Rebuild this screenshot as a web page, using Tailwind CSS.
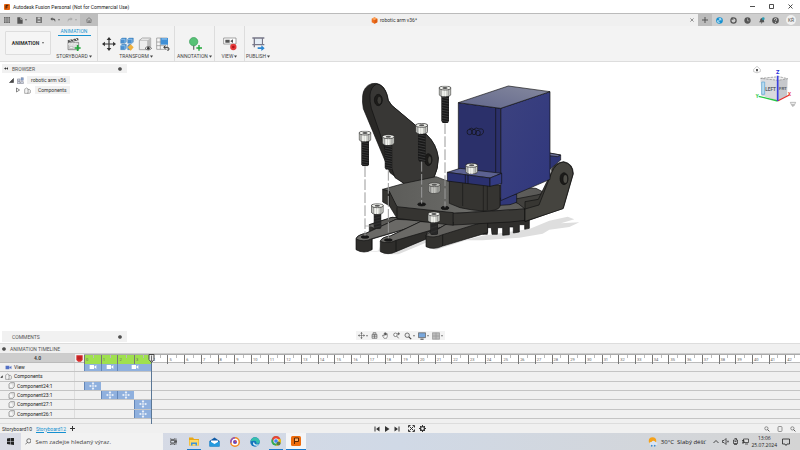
<!DOCTYPE html>
<html lang="en">
<head>
<meta charset="utf-8">
<meta name="viewport" content="width=device-width, initial-scale=1">
<title>Autodesk Fusion Personal</title>
<script src="https://cdn.jsdelivr.net/npm/@tailwindcss/browser@4"></script>
</head>
<body class="flex min-h-screen flex-col overflow-x-hidden bg-white font-[Roboto,'Liberation_Sans',sans-serif] text-[5px] leading-[8px] text-[#333]">

<svg class="hidden" aria-hidden="true">
  <symbol id="camera" viewBox="0 0 24 18"><path d="M2 3h13v12H2zM15 9l7-6v12z" fill="currentColor"/></symbol>
  <symbol id="move" viewBox="0 0 24 24"><path d="M12 0l4 5h-3v6h6V8l5 4-5 4v-3h-6v6h3l-4 5-4-5h3v-6H5v3l-5-4 5-4v3h6V5H8z" fill="currentColor"/></symbol>
  <symbol id="body" viewBox="0 0 20 20"><path d="M3 6l4-4h11v11l-4 5H3z" fill="#f8f8f8" stroke="#777" stroke-width="2" stroke-linejoin="round"/><path d="M6 5h8v9" fill="none" stroke="#aaa"/></symbol>
  <symbol id="bodies" viewBox="0 0 22 20"><path d="M2 7q0-3 3-3l3-2 5 3v12l-4 2H2zM11 8l5-2 4 3v8l-4 2h-7" fill="#f4f4f4" stroke="#777" stroke-width="1.8"/></symbol>
  <symbol id="dot" viewBox="0 0 12 12"><circle cx="6" cy="6" r="5.5" fill="#333"/><path d="M3 6h6" stroke="#aaa" stroke-width="1.5"/></symbol>
  <symbol id="caret" viewBox="0 0 8 6"><path d="M0 0h8L4 6z" fill="currentColor"/></symbol>
  <symbol id="lens" viewBox="0 0 20 20"><circle cx="8" cy="8" r="5.5" fill="#eee" stroke="#555" stroke-width="2"/><path d="M12 12l6 6" stroke="#444" stroke-width="3"/></symbol>
  <symbol id="screw-head" viewBox="0 0 38 34"><path d="M1 6v20q2 7 18 7t18-7V6z" fill="#c8cac4" stroke="#222" stroke-width="2"/><path d="M7 10v20M30 10v20" stroke="#999" stroke-width="3"/><path d="M13 11v21M20 11v21" stroke="#f2f3ef" stroke-width="5"/><ellipse cx="19" cy="7" rx="18" ry="6" fill="#f0f1ec" stroke="#222" stroke-width="2"/><ellipse cx="19" cy="7" rx="8" ry="3" fill="#555"/></symbol>
  <symbol id="thread" viewBox="0 0 26 76" preserveAspectRatio="none"><path d="M1 0h24v70l-4 6H5l-4-6z" fill="#191919"/><path d="M2 6l22 4M2 13l22 4M2 20l22 4M2 27l22 4M2 34l22 4M2 41l22 4M2 48l22 4M2 55l22 4M2 62l22 4M2 69l22 4" stroke="#555" stroke-width="1.5"/></symbol>
</svg>

<header>
  <div class="flex h-[13px] items-center gap-[3px] bg-white pl-1 text-[#222]">
    <svg class="size-[6px]" viewBox="0 0 18 18"><rect width="18" height="18" rx="3" fill="#e8630c"/><path d="M6 14V4h7M6 9h5" stroke="#40200c" stroke-width="3" fill="none"/></svg>
    <h1 class="flex-1">Autodesk Fusion Personal (Not for Commercial Use)</h1>
    <div class="flex gap-[14px] pr-[7px]">
      <button aria-label="Minimize"><svg class="size-[5px]" viewBox="0 0 10 10"><path d="M0 5h10" stroke="#222" stroke-width="1.6"/></svg></button>
      <button aria-label="Maximize"><svg class="size-[5px]" viewBox="0 0 10 10"><path d="M1 1h8v8H1z" stroke="#222" stroke-width="1.6" fill="none"/></svg></button>
      <button aria-label="Close"><svg class="size-[5px]" viewBox="0 0 10 10"><path d="M1 1l8 8M9 1L1 9" stroke="#222" stroke-width="1.6"/></svg></button>
    </div>
  </div>

  <div class="flex h-[13px] border-t border-[#bbb] bg-[#f0f0f0]">
    <div class="flex w-[80px] items-center bg-[#cfcfcf] pl-1 text-[#555]">
      <button class="w-[13px]" aria-label="Data panel"><svg class="size-[6px]" viewBox="0 0 18 18"><path d="M0 0h5v5H0zM6.500 0h5v5h-5zM13 0h5v5h-5zM0 6.500h5v5H0zM6.500 6.500h5v5h-5zM13 6.500h5v5h-5zM0 13h5v5H0zM6.500 13h5v5h-5zM13 13h5v5h-5z" fill="#666"/></svg></button>
      <button class="flex w-[19px] items-center gap-[2px]" aria-label="File"><svg class="h-[7px] w-[6px]" viewBox="0 0 18 21"><path d="M1 1h10l6 6v13H1z" fill="#555"/><path d="M11 1v6h6" stroke="#ddd" stroke-width="2" fill="none"/></svg><svg class="size-[2px]"><use href="#caret"/></svg></button>
      <button class="w-[14px]" aria-label="Save"><svg class="size-[6px]" viewBox="0 0 18 18"><path d="M1 1h16v16H1z" fill="#8a8a8a" stroke="#555" stroke-width="2"/><path d="M5 1h8v6H5zM4 11h10v5H4z" fill="#ddd" stroke="#555"/></svg></button>
      <button class="flex w-[17px] items-center gap-[2px]" aria-label="Undo"><svg class="size-[6px]" viewBox="0 0 18 18"><path d="M7 1L1 6l6 5V8q8-1 8 8 4-12-8-12z" fill="#555"/></svg><svg class="size-[2px]"><use href="#caret"/></svg></button>
      <button class="flex items-center gap-[2px] text-[#999]" aria-label="Redo"><svg class="size-[6px]" viewBox="0 0 18 18"><path d="M11 1l6 5-6 5V8q-8-1-8 8-4-12 8-12z" fill="#aaa"/></svg><svg class="size-[2px]"><use href="#caret"/></svg></button>
    </div>
    <button class="flex w-[18px] items-center justify-center bg-[#bebebe]" aria-label="Home"><svg class="size-[6px]" viewBox="0 0 18 18"><path d="M1 9l8-7 8 7M3 8v9h12V8M8 17v-6h3v6" fill="none" stroke="#666" stroke-width="2"/></svg></button>
    <div class="flex flex-1 items-center justify-between pr-1">
      <span></span>
      <span class="flex items-center gap-[2px]"><svg class="size-[7px]" viewBox="0 0 20 20"><path d="M10 1l8 4v10l-8 4-8-4V5z" fill="#f0711f"/><path d="M2 5l8 4 8-4-8-4z" fill="#f9a25c"/><path d="M10 9v10l8-4V5z" fill="#db5c12"/></svg>robotic arm v36*</span>
      <button aria-label="Close tab"><svg class="size-[4px]" viewBox="0 0 10 10"><path d="M1 1l8 8M9 1L1 9" stroke="#555" stroke-width="1.5"/></svg></button>
    </div>
    <div class="flex items-center bg-[#cfcfcf]">
      <button class="flex h-full w-[14px] items-center justify-center bg-[#bcbcbc]" aria-label="New tab"><svg class="size-[6px]" viewBox="0 0 12 12"><path d="M6 0v12M0 6h12" stroke="#555" stroke-width="2"/></svg></button>
      <div class="flex items-center gap-[7px] pl-1 pr-[4px]">
        <button aria-label="Extensions"><svg class="size-[7px]" viewBox="0 0 20 20"><circle cx="10" cy="10" r="9.500" fill="#1590d0"/><path d="M6 13l7-8M8 5h6v5M5 9v6h6" stroke="#fff" stroke-width="2" fill="none"/></svg></button>
        <button aria-label="Updates"><svg class="size-[7px]" viewBox="0 0 20 20"><circle cx="10" cy="10" r="7.500" fill="#ccc" stroke="#555" stroke-width="3.500"/><path d="M6 0v7h4" stroke="#555" stroke-width="2" fill="none"/></svg></button>
        <button aria-label="Job status"><svg class="size-[7px]" viewBox="0 0 20 20"><circle cx="10" cy="10" r="9" fill="#555"/><path d="M10 4v7h5" stroke="#bbb" stroke-width="2" fill="none"/></svg></button>
        <button aria-label="Notifications"><svg class="size-[7px]" viewBox="0 0 20 20"><path d="M3 15l3-4q0-8 6-8t5 8l1 4zM8 16h5l-3 3z" fill="#555"/><circle cx="15" cy="5" r="4" fill="#2b9ab0"/></svg></button>
        <button aria-label="Help"><svg class="size-[7px]" viewBox="0 0 20 20"><circle cx="10" cy="10" r="9.500" fill="#555"/><path d="M7 8q0-4 3-4t3 3-3 5M10 14v3" stroke="#ddd" stroke-width="2.500" fill="none"/></svg></button>
        <button class="flex size-[10px] items-center justify-center rounded-full bg-[#f0f0f0] text-[5px] text-[#555]">KŘ</button>
      </div>
    </div>
  </div>

  <div class="flex h-[36px] border-b border-[#ddd] bg-[#f3f3f3] text-[#444]">
    <button class="mb-[6px] ml-[5px] mt-[5px] flex w-[46px] items-center justify-center gap-[3px] rounded-[1px] border border-[#ddd] bg-[#f5f5f5] font-bold text-[#333]" aria-haspopup="menu">ANIMATION <svg class="size-[2px]"><use href="#caret"/></svg></button>
    <div class="flex w-[47px] flex-col items-center border-r border-[#ddd]">
      <a href="#" class="mt-[1px] h-[9px] w-[33px] border-b border-[#1793d1] text-center text-[#1793d1]">ANIMATION</a>
      <svg class="mt-[1px] size-[14px]" viewBox="0 0 42 42"><path d="M3 16h32v22H3z" fill="#ddd" stroke="#666" stroke-width="2"/><path d="M2 10l31-7 2 7-32 7z" fill="#555"/><path d="M7 8l6 6M16 6l6 6M25 4l6 6M8 17l-4 6M17 17l-4 6M26 17l-4 6" stroke="#eee" stroke-width="3"/><path d="M8 29h10v5H8z" fill="#fff" stroke="#777"/><path d="M32 24v18M23 33h18" stroke="#20a83a" stroke-width="5"/></svg>
      <button class="mt-px flex items-center gap-px">STORYBOARD <svg class="size-[3px]"><use href="#caret"/></svg></button>
    </div>
    <div class="flex w-[77px] flex-col items-center border-r border-[#ddd]">
      <div class="mt-[11px] flex gap-1">
        <button aria-label="Transform components"><svg class="size-[14px] text-[#333]"><use href="#move"/></svg></button>
        <button aria-label="Auto explode"><svg class="size-[14px]" viewBox="0 0 42 42"><g fill="#4a90d0" stroke="#2d6da5"><path d="M2 7l4-4h13v12l-4 4H2zM23 7l4-4h13v12l-4 4H23zM2 26l4-4h13v12l-4 4H2zM23 26l4-4h6v16H23z"/></g><path d="M2 7h13v12M23 7h13v12M2 26h13v12" fill="none" stroke="#a8d2f5" stroke-width="2"/><path d="M32 22l9 9-9 10-9-10z" fill="#f2b13b"/></svg></button>
        <button aria-label="Show or hide"><svg class="size-[14px]" viewBox="0 0 42 42"><path d="M4 10l9-7h25v25l-9 10H4z" fill="#eee" stroke="#888" stroke-width="2"/><path d="M4 10h25v28" fill="none" stroke="#aaa" stroke-width="2"/><path d="M29 10l9-7v25l-9 10z" fill="#bbb"/><path d="M21 34q10-11 20 0-10 10-20 0z" fill="#eee" stroke="#444" stroke-width="2"/><circle cx="31" cy="34" r="4" fill="#333"/></svg></button>
        <button aria-label="Restore home"><svg class="size-[14px]" viewBox="0 0 42 42"><path d="M2 3h32v34H2zM2 15h32M2 26h25M13 3v34" fill="#f6f6f6" stroke="#888" stroke-width="2"/><path d="M14 3h22v20H14z" fill="#3f8fd6"/><path d="M17 6h16" stroke="#9ccbf3" stroke-width="3"/><path d="M24 31h10q5 0 5 5t-5 4M29 26l-6 5 6 5" stroke="#333" stroke-width="3" fill="none"/></svg></button>
      </div>
      <button class="mt-px flex items-center gap-px">TRANSFORM <svg class="size-[3px]"><use href="#caret"/></svg></button>
    </div>
    <div class="flex w-[40px] flex-col items-center border-r border-[#ddd]">
      <svg class="mt-[11px] size-[14px]" viewBox="0 0 42 42"><path d="M17 24v14" stroke="#777" stroke-width="4"/><circle cx="17" cy="14" r="12.500" fill="#58c276" stroke="#349a55" stroke-width="2"/><path d="M33 24v17M25 33h17" stroke="#20a83a" stroke-width="4"/></svg>
      <button class="mt-px flex items-center gap-px">ANNOTATION <svg class="size-[3px]"><use href="#caret"/></svg></button>
    </div>
    <div class="flex w-[30px] flex-col items-center border-r border-[#ddd]">
      <svg class="mt-[11px] size-[14px]" viewBox="0 0 42 42"><path d="M2 3h37v18H2z" fill="#fff" stroke="#777" stroke-width="2"/><path d="M7 8h13v9H7zM22 12l8-5v11l-8-5z" fill="#555"/><circle cx="31" cy="30" r="9.500" fill="#e33a3a"/><circle cx="31" cy="30" r="4" fill="#b31217"/></svg>
      <button class="mt-px flex items-center gap-px">VIEW <svg class="size-[3px]"><use href="#caret"/></svg></button>
    </div>
    <div class="flex w-[26px] flex-col items-center">
      <svg class="mt-[11px] size-[14px]" viewBox="0 0 42 42"><path d="M4 3h36M4 23h36M10 3v28M34 3v20" stroke="#778" stroke-width="4" fill="none"/><path d="M12 6h20v15H12z" fill="#e5edf5"/><path d="M20 31h11v-6l10 9-10 8v-6H20z" fill="#2b86d2"/></svg>
      <button class="mt-px flex items-center gap-px">PUBLISH <svg class="size-[3px]"><use href="#caret"/></svg></button>
    </div>
  </div>
</header>

<main class="relative flex flex-1 flex-col justify-between bg-white">
  <svg class="absolute left-1/2 top-[13px] -ml-[50px] h-[180px] w-[230px]" viewBox="0 0 690 540" role="img" aria-label="Exploded view of a robotic gripper" stroke-linejoin="round">
    <defs>
      <linearGradient id="top" x1="0" y1="1" x2="1" y2="0"><stop offset="0" stop-color="#62678c"/><stop offset="1" stop-color="#85899e"/></linearGradient>
      <linearGradient id="side" x1="0" y1="0" x2="1" y2="1"><stop offset="0" stop-color="#3c427f"/><stop offset="1" stop-color="#30377d"/></linearGradient>
      <linearGradient id="plate" x1="0" y1="0" x2="1" y2="0"><stop offset="0" stop-color="#5b5b58"/><stop offset=".5" stop-color="#6a6a67"/><stop offset="1" stop-color="#575654"/></linearGradient>
    </defs>
    <g fill="#dedede"><path d="M235 520l35-6 128-32 140-20 60-25 55-12 20 8-40 12 55-3-30 14-60 8-20 12-70 12-110 8-50 0-90 28z"/><path d="M25 534l60-7 8-20 0 22zM95 538l50 0 90-38v-12z"/></g>
    <g stroke="#111" stroke-width="2">
      <path d="M38 62q3-28 27-36 28-6 42 22 6 12 8 28l10 15 105 88q30 28 35 70 0 32-14 61L165 328l-45-35-80-192q-4-20-2-39z" fill="#292826"/>
      <path d="M60 60q2-24 20-33 20 2 30 30l5 20 10 14 105 88q30 28 35 70 0 32-14 61l-88 16-28-18L64 100q-5-20-4-40z" fill="#383735"/>
      <ellipse cx="85" cy="75" rx="12" ry="17" fill="#1d1c1a"/><ellipse cx="88" cy="76" rx="7" ry="12" fill="#3d3c38"/>
      <ellipse cx="235" cy="254" rx="11" ry="18" fill="#1d1c1a"/><ellipse cx="239" cy="255" rx="6" ry="12" fill="#45443f"/>
      <path d="M58 449l68-22 60 4-95 36-4 12-29-6z" fill="#31302e"/>
      <path d="M58 449l68-22 60 4-95 33q-20 3-33-15z" fill="#5a5956"/>
      <path d="M18 492q3-12 30-17l90-42 110 5-182 54v32q-24 14-48 0z" fill="#2f2e2c"/>
      <path d="M18 492q3-12 30-17l90-42 110 5-182 53q-24 12-48 1z" fill="#6a6966"/>
      <path d="M66 492v32" fill="none"/>
      <path d="M91 499q3-12 30-16l90-43 110 3-90 30v18l-93 39q-24 12-47 0z" fill="#2e2d2b"/>
      <path d="M91 499q3-12 30-16l90-43 110 3-183 53q-24 12-47 3z" fill="#6a6966"/>
      <path d="M138 497v32" fill="none"/>
      <path d="M398 430h140v30l-14 3v-14h-16v22l-18 3v-18h-12v23l-20 2v-23h-15l-1 20h-16l-2-20h-12v20h-14z" fill="#2f2e2c"/>
      <path d="M228 482q3-9 25-13l40-24 120-10v38l-135 40q-27 13-50 2z" fill="#33322f"/>
      <path d="M228 482q3-9 25-13l40-24 120-8-135 42q-27 12-50 3z" fill="#62615e"/>
      <path d="M278 479v34" fill="none"/>
      <path d="M98 343l65-18 95-20 40 15 260 20 40 20-73 42-215 13-169-18-25-48z" fill="url(#plate)"/>
      <path d="M98 343l20 6 23 46 169 18v38l-169-21-23-38-20-11z" fill="#353431"/>
      <path d="M310 415l215-13v34l-45 5-170 9z" fill="#393835"/>
      <path d="M118 349v43M141 397v33" fill="none"/>
      <path d="M480 375l80-15 40-10-10 30-65 22-20-16z" fill="#41403d"/>
      <path d="M525 380l40-7 40-83 0-8q12-19 36-22 28 5 29 36l-30 104-115 40z" fill="#373632"/>
      <path d="M525 402l42-12 38-97q12-29 35-32 28 5 29 36l-30 104-114 38z" fill="#45443f"/>
      <ellipse cx="642" cy="311" rx="12" ry="18" fill="#1c1b19"/><ellipse cx="646" cy="312" rx="7" ry="13" fill="#504f49"/>
      <path d="M450 370l50-13v25l-20 7-30 2z" fill="#303779"/>
      <path d="M598 234l34 6v15l-34 30z" fill="#2f3676"/>
      <path d="M598 234l34 6-10 5-24-3z" fill="#6b7097"/>
      <path d="M452 100l148-50v263l-148 64z" fill="url(#side)"/>
      <path d="M325 83l127 17v200l-127-15z" fill="#2b306a"/>
      <path d="M325 83l150-50 125 17-148 50z" fill="url(#top)"/>
      <path d="M437 99v195" fill="none"/>
      <g fill="none"><ellipse cx="359" cy="171" rx="8" ry="8"/><ellipse cx="372" cy="171" rx="7" ry="8"/><ellipse cx="384" cy="174" rx="7" ry="8"/><path d="M357 163q8-7 14 0 7-8 16-1 16-3 13 11-4 9-13 8"/></g>
      <path d="M298 318l152 12v65q-8 14-50 13-35-2-70-10l-32-13z" fill="#353431"/>
      <path d="M338 325v68M400 332v75M412 333v72" fill="none" stroke-width="1.500"/>
      <path d="M292 292l38-12 125 15-35 14z" fill="#5c6291"/>
      <path d="M292 292l128 17v25l-128-16z" fill="#2b316f"/>
      <path d="M420 309l35-14v31l-35 8z" fill="#333b82"/>
      <path d="M346 299v26M354 300v26" fill="none"/>
      <ellipse cx="215" cy="388" rx="12" ry="5" fill="#171717"/><ellipse cx="285" cy="399" rx="12" ry="5" fill="#171717"/>
      <ellipse cx="45" cy="486" rx="12" ry="4" fill="#171717"/><ellipse cx="115" cy="495" rx="12" ry="4" fill="#171717"/>
    </g>
    <g stroke="#999" stroke-width="3" stroke-dasharray="32 7"><path d="M45 274v208M115 285v205M215 258v128M285 145v252"/></g>
    <path d="M45 453h35" stroke="#999" stroke-width="2"/>
    <use href="#thread" x="273" y="60" width="25" height="84"/><use href="#screw-head" x="266" y="32" width="38" height="34"/>
    <use href="#thread" x="33" y="196" width="25" height="78"/><use href="#screw-head" x="26" y="167" width="38" height="34"/>
    <use href="#thread" x="103" y="206" width="25" height="78"/><use href="#screw-head" x="96" y="178" width="38" height="34"/>
    <use href="#thread" x="203" y="172" width="25" height="88"/><use href="#screw-head" x="196" y="144" width="38" height="34"/>
    <use href="#thread" x="70" y="413" width="25" height="49"/><use href="#screw-head" x="63" y="385" width="38" height="34"/>
    <use href="#thread" x="240" y="438" width="25" height="42"/><use href="#screw-head" x="233" y="410" width="38" height="34"/>
    <use href="#screw-head" x="234" y="322" width="38" height="34" opacity=".65"/>
    <use href="#screw-head" x="346" y="264" width="38" height="34"/>
  </svg>

  <div class="flex items-start justify-between">
    <nav class="pl-[2px] pt-[2px]" aria-label="Browser">
      <div class="flex h-[9px] w-[125px] items-center gap-1 bg-[#f1f1f1] pl-[2px] pr-[5px] text-[#555]">
        <svg class="h-[3px] w-[4px]" viewBox="0 0 12 8"><path d="M6 0v8L0 4zM12 0v8L6 4z" fill="#333"/></svg>
        <span class="flex-1">BROWSER</span><svg class="size-[4px]"><use href="#dot"/></svg>
      </div>
      <div class="mt-[2px] flex h-[10px] items-center gap-[3px] pl-[7px]">
        <svg class="size-[5px]" viewBox="0 0 10 10"><path d="M9 1v8H1zM6 5v3" fill="#555" stroke="#222"/></svg>
        <svg class="size-[7px]" viewBox="0 0 21 21"><path d="M1 6h8v6H1zM1 14h8v6H1zM11 14h8v6h-8z" fill="#dfe7f2" stroke="#667" stroke-width="1.500"/><path d="M12 2h7v8h-7z" fill="#88a9d6" stroke="#557"/></svg>
        <span class="bg-[#f1f1f1] px-1">robotic arm v36</span>
      </div>
      <div class="flex h-[10px] items-center gap-[4px] pl-[14px]">
        <svg class="h-[6px] w-[4px]" viewBox="0 0 8 10"><path d="M1 1l6 4-6 4z" fill="none" stroke="#555" stroke-width="1.400"/></svg>
        <svg class="size-[7px]"><use href="#bodies"/></svg>
        <span class="bg-[#f1f1f1] px-[3px]">Components</span>
      </div>
    </nav>
    <svg class="h-[50px] w-[60px]" viewBox="0 6 180 150" role="img" aria-label="View cube" font-family="Roboto, sans-serif">
      <path d="M41 28l10-9 10 9v7q-10 7-20 0z" fill="#fff" stroke="#999" stroke-width="1.500"/><path d="M48 27h6v7h-6z" fill="#555"/>
      <path d="M62 55l55-4 26 6-2 52-27 13-50-16z" fill="#c6c8cc"/>
      <path d="M62 55l52 6v60l-50-16z" fill="#dadbde"/><path d="M62 55l55-5 26 6-29 5z" fill="#f0f0f0" stroke="#888" stroke-dasharray="7 3" stroke-width="2"/>
      <path d="M65 66h9v37h-9z" fill="#b8dcf0" stroke="#5ba5d4" stroke-width="2"/>
      <text x="76" y="92" font-size="14" font-weight="bold" fill="#5c6068">LEFT</text><text x="117" y="90" font-size="13" font-weight="bold" fill="#5c6068">FRT</text>
      <path d="M113 123L56 109" stroke="#28c840" stroke-width="4"/><path d="M113 123l35-18" stroke="#e8322d" stroke-width="4"/><path d="M113 123V47" stroke="#3a3fe0" stroke-width="5"/>
      <text x="108" y="43" font-size="17" font-weight="bold" fill="#2b31d8">Z</text><text x="144" y="108" font-size="14" font-weight="bold" fill="#e8322d">X</text><text x="47" y="114" font-size="14" font-weight="bold" fill="#28c840">Y</text>
      <path d="M151 127h16l-3 7h-10zM155 136h8l-4 4z" fill="#eee" stroke="#888" stroke-width="1.500"/>
    </svg>
  </div>

  <div class="grid grid-cols-[1fr_auto_1fr] items-start pb-px">
    <div class="ml-[2px] flex h-[11px] w-[125px] items-center justify-between bg-[#f1f1f1] pl-[10px] pr-[5px] text-[#555]">COMMENTS <svg class="size-[4px]"><use href="#dot"/></svg></div>
    <div class="flex h-[9px] items-center gap-[3px] bg-[#f3f3f3] px-[2px] text-[#555]" role="toolbar" aria-label="Navigation">
      <button class="flex items-center gap-px" aria-label="Orbit"><svg class="size-[7px]"><use href="#move"/></svg><svg class="size-[2px]"><use href="#caret"/></svg></button>
      <button aria-label="Look at"><svg class="size-[7px]" viewBox="0 0 20 20"><path d="M3 7h14v11H3zM6 7V2h8v5M3 12h14M10 7v11" fill="#ddd" stroke="#666" stroke-width="2"/></svg></button>
      <button class="ml-px" aria-label="Pan"><svg class="size-[7px]" viewBox="0 0 20 20"><path d="M6 18l-5-8 2-1 3 3V4h2v5-7h2v7-6h2v6-4h3v8l-2 5z" fill="#fff" stroke="#444" stroke-width="1.500"/></svg></button>
      <button class="ml-px" aria-label="Zoom"><svg class="size-[7px]" viewBox="0 0 20 20"><circle cx="7" cy="8" r="5" fill="#fff" stroke="#555" stroke-width="2"/><path d="M11 12l5 6M16 1v8M12 5h8" stroke="#444" stroke-width="2"/></svg></button>
      <button class="ml-px flex items-center gap-px" aria-label="Fit"><svg class="size-[8px]"><use href="#lens"/></svg><svg class="size-[2px]"><use href="#caret"/></svg></button>
      <button class="flex items-center gap-px" aria-label="Display settings"><svg class="size-[8px]" viewBox="0 0 20 20"><path d="M1 2h18v12H1z" fill="#78a7dc" stroke="#666" stroke-width="2"/><path d="M6 18h8" stroke="#555" stroke-width="3"/></svg><svg class="size-[2px]"><use href="#caret"/></svg></button>
      <button class="flex items-center gap-px" aria-label="Viewports"><svg class="size-[8px]" viewBox="0 0 20 20"><path d="M1 2h18v16H1zM1 10h18M10 2v16" fill="#bbb" stroke="#999" stroke-width="2"/></svg><svg class="size-[2px]"><use href="#caret"/></svg></button>
    </div>
  </div>
</main>

<section class="overflow-hidden border-t border-[#ddd] bg-[#f0f0f0]" aria-label="Animation timeline">
  <div class="flex h-[10px] items-center gap-1 border-b border-[#ccc] pl-[2px] text-[#555]"><svg class="size-[4px]"><use href="#dot"/></svg>ANIMATION TIMELINE</div>
  <div class="relative">
    <div class="flex h-[9px] border-b border-[#bbb]">
      <div class="w-[75px] bg-[#cdcdcd] text-center font-bold text-[#444]">4.0</div>
      <div class="flex w-[9px] items-center justify-center"><svg class="size-[7px]" viewBox="0 0 20 20"><path d="M1 1h18v13l-5 5H6l-5-5z" fill="#d92b2b"/><path d="M4 6h12M4 11h12" stroke="#991818" stroke-width="2"/></svg></div>
      <ol id="ruler" class="-mr-[2px] grid flex-1 grid-cols-[repeat(43,minmax(0,1fr))] border-t border-[#aaa] bg-white text-[4px] leading-[9px]"></ol>
    </div>
    <div id="tracks" class="flex h-[56px] flex-col"></div>
    <div class="h-[5px] border-b border-[#ddd]"></div>
    <div class="pointer-events-none absolute inset-y-0 -right-[2px] left-[84px] grid grid-cols-[repeat(43,minmax(0,1fr))]">
      <div class="relative col-start-5 border-l border-[#5a7796]"><svg class="absolute -left-[4px] top-0 h-[9px] w-[7px]" viewBox="0 0 14 18"><path d="M2 1h10v10l-5 6-5-6z" fill="#eee" stroke="#444" stroke-width="2"/><path d="M7 3v12" stroke="#444" stroke-width="1.500"/></svg></div>
    </div>
  </div>
  <div class="grid h-[9px] grid-cols-[1fr_auto_1fr] items-center">
    <div class="flex items-center gap-1 pl-[2px]">
      <a href="#">Storyboard10</a><a href="#" class="text-[#1590d0] underline underline-offset-1">Storyboard12</a>
      <button aria-label="Add storyboard"><svg class="size-[5px]" viewBox="0 0 10 10"><path d="M5 0v10M0 5h10" stroke="#333" stroke-width="2"/></svg></button>
    </div>
    <div class="flex items-center gap-1">
      <button aria-label="To start"><svg class="size-[6px]" viewBox="0 0 12 12"><path d="M1 1h2v10H1zM11 1v10L4 6z" fill="#333"/></svg></button>
      <button aria-label="Play"><svg class="size-[6px]" viewBox="0 0 12 12"><path d="M2 0l9 6-9 6z" fill="#333"/></svg></button>
      <button aria-label="To end"><svg class="size-[6px]" viewBox="0 0 12 12"><path d="M9 1h2v10H9zM1 1v10l7-5z" fill="#333"/></svg></button>
      <button class="ml-1" aria-label="Fit timeline"><svg class="size-[7px]" viewBox="0 0 14 14"><path d="M1 5V1h4M9 1h4v4M13 9v4H9M5 13H1V9M3 3l8 8M11 3l-8 8" fill="none" stroke="#333" stroke-width="2"/></svg></button>
      <button aria-label="Settings"><svg class="size-[7px]" viewBox="0 0 14 14"><circle cx="7" cy="7" r="4" fill="none" stroke="#333" stroke-width="2.500"/><path d="M7 0v3M7 11v3M0 7h3M11 7h3M2 2l2 2M10 10l2 2M12 2l-2 2M4 10l-2 2" stroke="#333" stroke-width="2"/></svg></button>
    </div>
    <div class="flex items-center justify-end gap-[7px] pr-[4px]">
      <button aria-label="Zoom out"><svg class="size-[6px]"><use href="#lens"/></svg></button>
      <button aria-label="Zoom range"><svg class="size-[6px]" viewBox="0 0 12 12"><rect x="2" y="1" width="8" height="10" rx="2" fill="#eee" stroke="#777" stroke-width="1.500"/></svg></button>
      <button aria-label="Zoom in"><svg class="size-[6px]"><use href="#lens"/></svg></button>
    </div>
  </div>
</section>

<footer class="flex h-[17px] bg-linear-to-r from-[#d9dbe5] via-[#d0d9e6] to-[#d4d4d4] font-['Open_Sans','Noto_Sans',sans-serif] text-[#222]">
  <button class="flex w-[21px] items-center justify-center" aria-label="Start"><svg class="size-[7px]" viewBox="0 0 14 14"><path d="M0 1l6-1v6H0zM7 0l7-1v7H7zM0 7h6v6l-6-1zM7 7h7v7l-7-1z" fill="#222"/></svg></button>
  <label class="flex w-[142px] items-center gap-[4px] bg-[#f2f2f2] pl-[4px]">
    <svg class="size-[7px]" viewBox="0 0 20 20"><circle cx="12" cy="8" r="6.500" fill="none" stroke="#333" stroke-width="2"/><path d="M7 13l-6 6" stroke="#333" stroke-width="2"/></svg>
    <input class="w-full bg-transparent text-[6px] outline-none placeholder:text-[#444]" placeholder="Sem zadejte hledaný výraz." aria-label="Sem zadejte hledaný výraz.">
  </label>
  <div class="flex">
    <button class="flex w-5 items-center justify-center" aria-label="Task view"><svg class="size-[7px]" viewBox="0 0 20 20"><path d="M2 7h11v7H2zM2 1v3h11V1M2 20v-3h11v3M17 1v18M15 8h4v4h-4z" fill="none" stroke="#333" stroke-width="2"/></svg></button>
    <button class="flex w-[21px] items-center justify-center" aria-label="File Explorer"><span class="flex h-full w-[14px] items-center justify-center border-b border-[#1979ca]"><svg class="h-[9px] w-[10px]" viewBox="0 0 20 18"><path d="M0 1h8l2 3h10v13H0z" fill="#e8a818"/><path d="M1 6h18v11H1z" fill="#ffd968"/><path d="M4 17v-6h12v6h-3v-3H7v3z" fill="#3c93dc"/></svg></span></button>
    <button class="flex w-[20px] items-center justify-center" aria-label="Mail"><svg class="h-[10px] w-[11px]" viewBox="0 0 22 20"><path d="M1 8l10-7 10 7v11H1z" fill="#0f5ba6"/><path d="M4 7h14v7H4z" fill="#fff"/><path d="M1 8l10 6 10-6v11H1z" fill="#249ade"/></svg></button>
    <button class="flex w-[21px] items-center justify-center" aria-label="Secure browser"><svg class="size-[10px]" viewBox="0 0 20 20"><circle cx="10" cy="10" r="8.500" fill="#fff" stroke="#f58a20" stroke-width="3"/><path d="M10 1.500a8.500 8.500 0 00-8 10" fill="none" stroke="#8753c7" stroke-width="3"/><circle cx="10" cy="10" r="4" fill="#6b46b8"/><path d="M10 6l4 4h-4z" fill="#e74c3c"/></svg></button>
    <button class="flex w-[20px] items-center justify-center" aria-label="Edge"><svg class="size-[10px]" viewBox="0 0 20 20"><circle cx="10" cy="10" r="9.500" fill="#1674bd"/><path d="M1 9q2-8 9-8.500 9 1 9.500 9-1 5-7 4 2-6-4-6-5 0-7.500 1.500z" fill="#36bfad"/><path d="M8 10q0 6 10 5l-2 2Q6 19 6 12z" fill="#dff4fb"/></svg></button>
    <button class="flex w-[21px] items-center justify-center" aria-label="Chrome"><span class="flex h-full w-[14px] items-center justify-center border-b border-[#1979ca]"><svg class="size-[10px]" viewBox="0 0 20 20"><circle cx="10" cy="10" r="9.500" fill="#34a853"/><path d="M2 5a9.500 9.500 0 0117 1H10L6 12z" fill="#ea4335"/><path d="M19 6a9.500 9.500 0 01-9 13.500l4-8L12 6z" fill="#fbbc05"/><circle cx="10" cy="10" r="4.500" fill="#4285f4" stroke="#fff" stroke-width="1.500"/><circle cx="15" cy="15" r="4" fill="#557a4b"/></svg></span></button>
    <button class="flex w-[20px] items-center justify-center border-b border-[#1979ca] bg-[#f4f5f7]" aria-label="Fusion"><svg class="size-[10px]" viewBox="0 0 20 20"><rect width="20" height="20" rx="3" fill="#ee6c0d"/><path d="M7 16V4h8v7H7" fill="#ffb169" stroke="#5c2805" stroke-width="2"/></svg></button>
  </div>
  <div class="ml-auto flex items-center">
    <svg class="mr-[3px] size-[10px]" viewBox="0 0 20 20"><circle cx="9" cy="8" r="7.500" fill="#f5a21b"/><path d="M4 16q-4-6 3-6 3-5 8 0 6 1 3 6z" fill="#d9e5f5"/><path d="M8 16l-1 3M14 16l-1 3" stroke="#2581d6" stroke-width="2.500"/></svg>
    <span class="flex gap-[3px] text-[6px]"><span>30°C</span><span>Slabý déšť</span></span>
    <div class="ml-[7px] flex items-center gap-[3px]">
      <svg class="size-[6px]" viewBox="0 0 12 12"><path d="M1 8l5-5 5 5" fill="none" stroke="#222" stroke-width="1.600"/></svg>
      <svg class="size-[7px]" viewBox="0 0 14 14"><path d="M1 5h3l4-4v12L4 9H1zM10 5l4 4M14 5l-4 4" fill="none" stroke="#222" stroke-width="1.400"/></svg>
      <svg class="size-[7px]" viewBox="0 0 14 14"><path d="M3 4h8v7H3zM5 1h4v3M4 13h6M5 7h4" fill="none" stroke="#222" stroke-width="1.400"/></svg>
      <svg class="size-[7px]" viewBox="0 0 14 14"><path d="M3 2h10v7H3zM6 12h6M0 5h4v5H0z" fill="#ddd" stroke="#222" stroke-width="1.400"/></svg>
    </div>
    <time class="ml-[3px] text-center text-[5px] leading-[7px]" datetime="2024-07-25T13:06">13:06<br>25.07.2024</time>
    <button class="ml-[5px] mr-[10px]" aria-label="Notification center"><svg class="size-[8px]" viewBox="0 0 16 16"><path d="M1 2h14v10h-5l-2 3-2-3H1z" fill="none" stroke="#222" stroke-width="1.600"/></svg></button>
  </div>
</footer>

<script>
  // Ruler: one column per second, the first four are the played range.
  document.getElementById('ruler').innerHTML = Array.from({ length: 43 }, (_, i) => `
    <li class="relative ${i < 4 ? 'bg-[#9fe04f]' : ''} border-l border-[#777] pl-px text-[#666]">
      <span class="absolute left-1/2 top-0 h-[3px] border-l border-[#bbb]"></span>${i}</li>`).join('');

  // Tracks: "at" holds the grid placement of each clip.
  const tracks = [
    { name: 'View', icon: 'camera', clip: 'camera', pad: 'pl-[5px] text-[#5370c4]', at: ['col-start-1 col-span-1', 'col-start-2 col-span-1', 'col-start-3 col-span-2'] },
    { name: 'Components', icon: 'bodies', pad: 'pl-0', open: true, at: [] },
    { name: 'Component24:1', icon: 'body', clip: 'move', pad: 'pl-[8px]', at: ['col-start-1 col-span-1'] },
    { name: 'Component23:1', icon: 'body', clip: 'move', pad: 'pl-[8px]', at: ['col-start-2 col-span-1', 'col-start-3 col-span-1'] },
    { name: 'Component27:1', icon: 'body', clip: 'move', pad: 'pl-[8px]', at: ['col-start-4 col-span-1'] },
    { name: 'Component26:1', icon: 'body', clip: 'move', pad: 'pl-[8px]', at: ['col-start-4 col-span-1'] },
  ];
  document.getElementById('tracks').innerHTML = tracks.map(t => `
    <div class="flex flex-1 border-b border-[#c4c4c4]">
      <div class="${t.pad} flex w-[75px] items-center gap-[2px] border-r border-[#ddd]">
        ${t.open ? '<svg class="size-[3px]" viewBox="0 0 10 10"><path d="M9 1v8H1z" fill="#222"/></svg>' : ''}
        <svg class="size-[7px]"><use href="#${t.icon}"/></svg><span class="text-[#222]">${t.name}</span>
      </div>
      <div class="w-[9px]"></div>
      <div class="-mr-[2px] grid flex-1 grid-cols-[repeat(43,minmax(0,1fr))]">
        ${t.at.map(c => `<div class="${c} flex items-center justify-center border-l border-[#6487b8] bg-[#8fb0de] text-white"><svg class="size-[8px]"><use href="#${t.clip}"/></svg></div>`).join('')}
      </div>
    </div>`).join('');
</script>
</body>
</html>
